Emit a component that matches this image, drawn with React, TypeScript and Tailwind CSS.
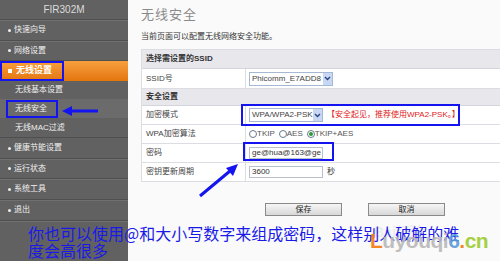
import React from 'react';

const cjk = "font-['Liberation_Sans','Noto_Sans_CJK_SC',sans-serif]";

function MainItem({ label, h }: { label: string; h: string }) {
  return (
    <div className={`${h} flex items-center pl-[8px] gap-[3px] border-b border-[#4f4f4f] shadow-[0_1px_0_#707070]`}>
      <span className="w-[3px] h-[3px] bg-[#eee] rounded-full" />
      <span>{label}</span>
    </div>
  );
}

function SubItem({ label, h, active }: { label: string; h: string; active?: boolean }) {
  return (
    <div className={`${h} flex items-center pl-[15px] ${active ? 'bg-[#6b6b6b]' : ''}`}>
      {label}
    </div>
  );
}

function Select({ value, w }: { value: string; w: string }) {
  return (
    <div className={`${w} h-[14px] shrink-0 flex items-center border border-[#a5b8d4] bg-white`}>
      <span className="flex-1 pl-[2px] text-[8px] leading-none text-[#444] whitespace-nowrap overflow-hidden">{value}</span>
      <span className="w-[9px] h-full bg-[#c8d8f4] flex items-center justify-center">
        <svg width="7" height="5" viewBox="0 0 7 5">
          <path d="M1 1 L3.5 3.5 L6 1" stroke="#2a3f7a" strokeWidth="1.3" fill="none" />
        </svg>
      </span>
    </div>
  );
}

function Input({ value }: { value: string }) {
  return (
    <div className="w-[74px] h-[12px] shrink-0 border border-[#b8c0cc] bg-white flex items-center pl-[2px] text-[8px] leading-none text-[#333] whitespace-nowrap overflow-hidden">
      {value}
    </div>
  );
}

function Radio({ label, checked }: { label: string; checked?: boolean }) {
  return (
    <span className="flex items-center">
      <span className="w-[8px] h-[8px] rounded-full border border-[#6a7a90] bg-white flex items-center justify-center">
        {checked && <span className="w-[4px] h-[4px] rounded-full bg-[#2a9a3a]" />}
      </span>
      <span>{label}</span>
    </span>
  );
}

function Row({ label, h, children }: { label: string; h: string; children: React.ReactNode }) {
  return (
    <div className={`${h} flex border-b border-[#dcdde3] bg-white`}>
      <div className="w-[104px] shrink-0 pl-[4px] flex items-center border-r border-[#dcdde3] text-[#444]">{label}</div>
      <div className="flex-1 pl-[3px] flex items-center gap-[4px] whitespace-nowrap">{children}</div>
    </div>
  );
}

export default function App() {
  return (
    <div className={`relative w-[500px] h-[261px] overflow-hidden flex bg-[#fafafa] ${cjk}`}>
      <aside className="w-[128px] shrink-0 bg-[#616161] text-[8px] text-[#f0f0f0]">
        <div className="h-[20px] flex items-center justify-center text-[10px] text-[#dcdcdc] border-b border-[#4f4f4f] shadow-[0_1px_0_#707070]">
          FIR302M
        </div>
        <MainItem label="快速向导" h="h-[21px]" />
        <MainItem label="网络设置" h="h-[20px]" />
        <div className="h-[20px] flex items-center pl-[8px] gap-[4px] bg-gradient-to-b from-[#f6a03c] to-[#e47508] text-white text-[9px] font-bold">
          <span className="w-[4px] h-[4px] bg-white" />
          <span>无线设置</span>
        </div>
        <SubItem label="无线基本设置" h="h-[18px]" />
        <SubItem label="无线安全" h="h-[19px]" active />
        <SubItem label="无线MAC过滤" h="h-[19px]" />
        <div className="border-t border-[#4f4f4f]">
          <MainItem label="健康节能设置" h="h-[21px]" />
          <MainItem label="运行状态" h="h-[20px]" />
          <MainItem label="系统工具" h="h-[21px]" />
          <MainItem label="退出" h="h-[21px]" />
        </div>
      </aside>

      <main className="flex-1 pl-[13px] pt-[7px] text-[8px]">
        <h1 className="text-[13px] leading-[15px] text-[#8a8a8a] tracking-[1px]">无线安全</h1>
        <p className="mt-[9px] text-[8px] leading-[11px] text-[#333]">当前页面可以配置无线网络安全功能。</p>
        <div className="mt-[7px] w-[380px] border-l border-t border-[#dcdde3]">
          <div className="h-[19px] flex items-center pl-[4px] bg-[#e7e7ec] border-b border-[#d4d5dc] font-bold text-[#333]">选择需设置的SSID</div>
          <Row label="SSID号" h="h-[20px]">
            <Select value="Phicomm_E7ADD8" w="w-[84px]" />
          </Row>
          <div className="h-[17px] flex items-center pl-[4px] bg-[#e7e7ec] border-b border-[#d4d5dc] font-bold text-[#333]">安全设置</div>
          <Row label="加密模式" h="h-[19px]">
            <Select value="WPA/WPA2-PSK" w="w-[74px]" />
            <span className="text-[#e01818] text-[8px]">【安全起见，推荐使用WPA2-PSK。】</span>
          </Row>
          <Row label="WPA加密算法" h="h-[19px]">
            <span className="flex items-center gap-[4px] text-[#555]">
              <Radio label="TKIP" />
              <Radio label="AES" />
              <Radio label="TKIP+AES" checked />
            </span>
          </Row>
          <Row label="密码" h="h-[19px]">
            <Input value="ge@hua@163@ge" />
          </Row>
          <Row label="密钥更新周期" h="h-[19px]">
            <Input value="3600" />
            <span className="text-[#333]">秒</span>
          </Row>
        </div>
        <div className="mt-[21px] pl-[124px] flex gap-[26px]">
          <button className="w-[77px] h-[13px] border border-[#8a8a8a] bg-gradient-to-b from-[#f6f6f6] to-[#d8d8d8] text-[8px] leading-none text-[#222]">保存</button>
          <button className="w-[77px] h-[13px] border border-[#8a8a8a] bg-gradient-to-b from-[#f6f6f6] to-[#d8d8d8] text-[8px] leading-none text-[#222]">取消</button>
        </div>
      </main>

      {/* annotations */}
      <div className="absolute left-[0px] top-[61px] w-[64px] h-[20px] border-2 border-[#1414f0]" />
      <div className="absolute left-[6px] top-[100px] w-[52px] h-[18px] border-2 border-[#1414f0]" />
      <div className="absolute left-[241px] top-[104px] w-[219px] h-[22px] border-2 border-[#1414f0]" />
      <div className="absolute left-[243px] top-[142px] w-[91px] h-[19px] border-2 border-[#1414f0]" />
      <svg className="absolute left-0 top-0" width="500" height="261">
        <line x1="98" y1="111" x2="70" y2="111" stroke="#1414f0" strokeWidth="3" />
        <polygon points="62,111 72,106 72,116" fill="#1414f0" />
        <line x1="200" y1="196" x2="230" y2="171" stroke="#1414f0" strokeWidth="3" />
        <polygon points="238,164 226,168 233,176" fill="#1414f0" />
      </svg>
      <div className="absolute left-[374px] top-[222px] text-[14px] font-bold text-[#e4e4e4] opacity-60">Bai经验</div>
      <div className="absolute left-[28px] top-[225px] text-[16px] leading-[17px] text-[#1a1ae8] font-['Noto_Sans_CJK_SC',sans-serif] whitespace-nowrap">
        <div>你也可以使用@和大小写数字来组成密码，这样别人破解的难</div>
        <div>度会高很多</div>
      </div>
      <div className="absolute left-[370px] top-[229px] text-[21px] leading-[24px] font-bold tracking-[-0.5px] font-['Liberation_Sans',sans-serif] opacity-90">
        <span className="text-[#f47a10]">L</span>
        <span className="text-[#b8b8b8]">uyouqi</span>
        <span className="text-[#5b9bd8]">6</span>
        <span className="text-[#f47a10]">.</span>
        <span className="text-[#9ccc30]">cn</span>
      </div>
    </div>
  );
}
